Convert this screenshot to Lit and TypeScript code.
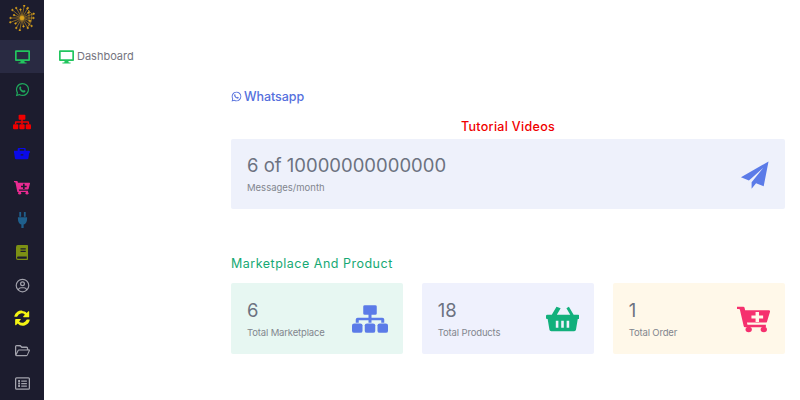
import { LitElement, html, css, svg } from "lit";
import { customElement } from "lit/decorators.js";

const desktop = svg`<path fill-rule="evenodd" d="M1.500 2h21a1.500 1.500 0 0 1 1.500 1.500v14a1.500 1.500 0 0 1-1.500 1.500h-7.500l.6 2.500h2.900v1.500h-13v-1.500h2.900l.6-2.500h-7.500a1.500 1.500 0 0 1-1.500-1.500v-14a1.500 1.500 0 0 1 1.500-1.500zm1.200 2.700v11.600h18.600v-11.600z"/>`;
const whatsapp = svg`<path fill-rule="evenodd" d="M12 1.500a10.500 10.500 0 0 1 0 21c-1.800 0-3.500-.45-5-1.280l-5.700 1.500 1.530-5.580a10.500 10.500 0 0 1 9.170-15.640zm0 2a8.500 8.500 0 0 0-7.100 13.200l-.9 3.300 3.400-.9a8.500 8.500 0 1 0 4.600-15.600z"/><path d="M8.800 7c-.4 0-1 .2-1.400.8-.9 1.200-.7 2.900.6 4.800 1.500 2.200 3.400 3.600 5.400 4 1.400.3 2.800-.4 3.200-1.500.2-.6.2-1.100.1-1.200l-2.400-1.200-1.100 1.300c-1.700-.6-3-1.900-3.800-3.500l.8-1-1-2.400c-.1-.1-.3-.1-.4-.1z"/>`;
const sitemap = svg`<path d="M8.500 1h7a1 1 0 0 1 1 1v5.500a1 1 0 0 1-1 1h-2.500v2.500h7.200a1.300 1.300 0 0 1 1.300 1.300v2.700h-2v-2h-6.500v2h-2v-2h-6.500v2h-2v-2.700a1.300 1.300 0 0 1 1.300-1.300h7.200v-2.500h-2.500a1 1 0 0 1-1-1v-5.500a1 1 0 0 1 1-1z"/><rect x="0" y="15.500" width="7" height="7.500" rx="1.500"/><rect x="8.500" y="15.500" width="7" height="7.500" rx="1.500"/><rect x="17" y="15.500" width="7" height="7.500" rx="1.500"/>`;
const briefcase = svg`<path fill-rule="evenodd" d="M8 1.500h8a1.500 1.500 0 0 1 1.500 1.500v3.500h5a1.500 1.500 0 0 1 1.500 1.500v1c0 .7-.5 1.300-1.200 1.400l-1.300 9.300c-.1.800-.8 1.300-1.600 1.300h-16.800c-.8 0-1.500-.5-1.600-1.300l-1.300-9.300a1.400 1.400 0 0 1-1.200-1.400v-1a1.500 1.500 0 0 1 1.500-1.500h5v-3.500a1.500 1.500 0 0 1 1.500-1.500zm.6 2v3h6.800v-3zm1.400 9v2h4v-2z"/>`;
const cart = svg`<path fill-rule="evenodd" d="M0 1.500h4.500a1 1 0 0 1 1 .8l.4 2.200h17.100a1 1 0 0 1 1 1.250l-2.200 8.500a1 1 0 0 1-1 .75h-13.600l.4 2h13.400v2h-15.100a1 1 0 0 1-1-.8l-2.700-13.700-.4-1h-2.800zm13.500 4.500v3h-3v2.500h3v3h2.500v-3h3v-2.500h-3v-3z"/><circle cx="8.500" cy="21" r="2.300"/><circle cx="19.500" cy="21" r="2.300"/>`;
const plug = svg`<path d="M5 0h4v7h-4zM15 0h4v7h-4zM2 8h20v2.500c0 4.500-3.200 7.700-7.500 8.300v5.200h-5v-5.200c-4.300-.6-7.500-3.800-7.500-8.300z"/>`;
const book = svg`<path fill-rule="evenodd" d="M3.500 0h19a1.500 1.500 0 0 1 1.500 1.500v21a1.500 1.500 0 0 1-1.500 1.500h-19a3.500 3.500 0 0 1-3.500-3.500v-17a3.500 3.500 0 0 1 3.500-3.500zm5.500 5v2h10.500v-2zm0 4v2h10.500v-2zm-5.500 9.500a1.800 1.800 0 0 0 0 3.500h18v-3.500z"/>`;
const user = svg`<path fill-rule="evenodd" d="M12 1a11 11 0 1 1 0 22 11 11 0 0 1 0-22zm0 2a9 9 0 0 0-7 14.650c.8-1.800 2.500-2.900 4.500-2.900h5c2 0 3.700 1.100 4.500 2.900a9 9 0 0 0-7-14.650zm-5.600 16.050a9 9 0 0 0 11.200 0c-.3-1.600-1.600-2.800-3.100-2.800h-5c-1.500 0-2.800 1.200-3.100 2.800zm5.600-13.800a4 4 0 1 1 0 8 4 4 0 0 1 0-8zm0 2a2 2 0 1 0 0 4 2 2 0 0 0 0-4z"/>`;
const sync = svg`<path d="M12 1.500c2.800 0 5.300 1.100 7.100 2.900l2.400-2.400c.4-.4 1.300-.2 1.300.5v7.500c0 .5-.4.800-.8.800h-7.500c-.7 0-1-.8-.5-1.300l2.400-2.400a6.800 6.800 0 0 0-11.200 2.400.8.800 0 0 1-.8.600h-3.300c-.5 0-.8-.4-.7-.9a10.800 10.800 0 0 1 12.600-8.200zM2 13.500h7.500c.7 0 1 .8.500 1.300l-2.400 2.400a6.800 6.800 0 0 0 11.200-2.400.8.800 0 0 1 .8-.6h3.300c.5 0 .8.400.7.900a10.800 10.800 0 0 1-18.200 5.300l-2.400 2.400c-.4.400-1.300.2-1.300-.5v-7.500c0-.5.400-.8.800-.8z"/>`;
const folder = svg`<path fill-rule="evenodd" d="M2.500 3h6.300l2.500 2.500h7.200a2.500 2.500 0 0 1 2.500 2.500v2h1a1.800 1.800 0 0 1 1.600 2.600l-3.300 7a2.500 2.500 0 0 1-2.300 1.400h-15.500a2.500 2.500 0 0 1-2.500-2.500v-13a2.500 2.500 0 0 1 2.500-2.500zm0 2a.5.500 0 0 0-.5.500v11l2-4.400a2.500 2.500 0 0 1 2.300-1.600h12.700v-2a.5.500 0 0 0-.5-.5h-8l-2.500-2.500zm3.800 7a.5.500 0 0 0-.5.300l-3.300 7h15.900a.5.500 0 0 0 .5-.3l3.100-7z"/>`;
const list = svg`<path fill-rule="evenodd" d="M2.500 2h19a2.500 2.500 0 0 1 2.500 2.500v15a2.500 2.500 0 0 1-2.500 2.500h-19a2.500 2.500 0 0 1-2.500-2.500v-15a2.500 2.500 0 0 1 2.500-2.500zm0 2a.5.500 0 0 0-.5.500v15a.5.500 0 0 0 .5.500h19a.5.500 0 0 0 .5-.5v-15a.5.500 0 0 0-.5-.5zm2.500 2.500h3v3h-3zm5 .5h9v2h-9zm-5 3.500h3v3h-3zm5 .5h9v2h-9zm-5 3.500h3v3h-3zm5 .5h9v2h-9z"/>`;
const plane = svg`<path d="M23.600 1.200 .8 14.200l6.600 2.700L19.300 6.400 9.600 18.500v5.300l3.700-4.600 6.300 2.600z"/>`;
const basket = svg`<path fill-rule="evenodd" d="M10.200 .6 5.600 8h-4.400a1.200 1.200 0 0 0-1.200 1.200v1.600c0 .7.500 1.200 1.200 1.200h.4l1.700 9.800c.2.900.9 1.600 1.800 1.600h22.200c.9 0 1.600-.7 1.800-1.600l1.700-9.800h.4c.7 0 1.200-.5 1.200-1.200v-1.600a1.200 1.200 0 0 0-1.200-1.200h-4.400l-4.600-7.400-2.400 1.500 3.700 5.900h-13l3.700-5.900zM9.500 13.500v6.500h2.500v-6.500zm5.250 0v6.500h2.500v-6.500zm5.250 0v6.500h2.500v-6.500z"/>`;

const rail: [ReturnType<typeof svg>, string, boolean][] = [
  [desktop, "green", true],
  [whatsapp, "wa", false],
  [sitemap, "red", false],
  [briefcase, "blue", false],
  [cart, "pink", false],
  [plug, "plug", false],
  [book, "olive", false],
  [user, "grey", false],
  [sync, "yellow", false],
  [folder, "grey", false],
  [list, "grey", false],
];

const spokes = Array.from({ length: 18 }, (_, i) => {
  const a = (i / 18) * Math.PI * 2;
  const r = [11.500, 8.500, 12.500][i % 3];
  const x = 13 + Math.cos(a) * r;
  const y = 13 + Math.sin(a) * r;
  return svg`<line x1="13" y1="13" x2=${x.toFixed(1)} y2=${y.toFixed(1)}/><circle cx=${x.toFixed(1)} cy=${y.toFixed(1)} r=".8"/>`;
});

@customElement("app-root")
export class AppRoot extends LitElement {
  static styles = css`
    :host {
      display: flex;
      width: 800px;
      height: 400px;
      overflow: hidden;
      background: #fff;
      font-family: "Inter", "Noto Sans", sans-serif;
    }
    svg { display: block; fill: currentColor; }
    .rail {
      width: 44px;
      flex: none;
      background: #1c1c2e;
      display: flex;
      flex-direction: column;
    }
    .logo { height: 40px; display: flex; align-items: center; justify-content: center; padding-bottom: 4px; box-sizing: border-box; color: #dca41c; }
    .logo svg { width: 26px; height: 26px; stroke: #dca41c; stroke-width: .55; }
    .item { height: 32.700px; flex: none; display: flex; align-items: center; justify-content: center; }
    .item svg { width: 15px; height: 15px; }
    .item.on { background: #292a42; }
    .green { color: #22c55e; }
    .wa { color: #1fa85c; }
    .red { color: #f00000; }
    .red svg { width: 18px; height: 16px; }
    .blue { color: #0a0ae8; }
    .blue svg { width: 16px; height: 14px; }
    .pink { color: #ea2b92; }
    .pink svg { width: 16px; height: 15px; }
    .plug { color: #1f5f8c; }
    .plug svg { width: 11px; height: 16px; }
    .olive { color: #7c9014; }
    .olive svg { width: 12px; height: 15px; }
    .grey { color: #a3a3ad; }
    .yellow { color: #f4f414; }
    .yellow svg { width: 16px; height: 16px; }
    .main { flex: 1; display: flex; min-width: 0; }
    .crumb {
      width: 187px;
      flex: none;
      box-sizing: border-box;
      padding: 49px 0 0 15px;
      display: flex;
      align-items: flex-start;
      gap: 3px;
      font-size: 11px;
      line-height: 15px;
      color: #75757f;
    }
    .crumb svg { width: 15px; height: 15px; color: #22c55e; }
    .content { width: 554px; flex: none; padding-top: 88px; display: flex; flex-direction: column; }
    .wlink {
      display: flex;
      align-items: center;
      gap: 2px;
      height: 16px;
      color: #5570dd;
      font-size: 12.500px;
      font-weight: 500;
      letter-spacing: -0.05px;
    }
    .wlink svg { width: 11px; height: 11px; }
    .tv {
      margin-top: 14px;
      height: 17px;
      line-height: 17px;
      text-align: center;
      color: #f00000;
      font-size: 12.500px;
      font-weight: 500;
      letter-spacing: 0.3px;
    }
    .card {
      display: flex;
      align-items: center;
      justify-content: space-between;
      box-sizing: border-box;
      border-radius: 2px;
    }
    .hero {
      margin-top: 4px;
      height: 70px;
      padding: 0 16px;
      background: #eef1fb;
    }
    .num { color: #6c7280; font-size: 18.500px; line-height: 22px; }
    .lab { color: #82868e; font-size: 9.500px; line-height: 13px; margin-top: 5px; }
    .stat .lab { letter-spacing: -0.15px; }
    .hero svg { width: 29px; height: 29px; color: #5b7be8; }
    .sub {
      margin-top: 46px;
      height: 17px;
      line-height: 17px;
      color: #16a974;
      font-size: 12.500px;
      font-weight: 400;
      letter-spacing: 0.5px;
    }
    .row { margin-top: 11px; display: grid; grid-template-columns: repeat(3, 1fr); gap: 18.500px; }
    .stat { height: 71px; padding: 0 15px 0 16px; }
    .mint { background: #e7f7f2; }
    .lav { background: #eff1fd; }
    .cream { background: #fff8e9; }
    .i1.stat-icon { width: 36px; height: 30px; }
    .i2.stat-icon { width: 33px; height: 26px; }
    .i3.stat-icon { width: 33px; height: 28px; }
    .i1 { color: #5b7be8; }
    .i2 { color: #12b07c; }
    .i3 { color: #f5306e; }
  `;

  render() {
    return html`
      <nav class="rail">
        <div class="logo">
          <svg viewBox="0 0 26 26">${spokes}<circle cx="13" cy="13" r="2"/><path d="M17 3 L23 9 L22 17 L18 23 M20 5 L20 21" fill="none"/></svg>
        </div>
        ${rail.map(
          ([icon, cls, on]) => html`<div class="item ${cls} ${on ? "on" : ""}"><svg viewBox="0 0 24 24" preserveAspectRatio="none">${icon}</svg></div>`
        )}
      </nav>
      <div class="main">
        <div class="crumb"><svg viewBox="0 0 24 24">${desktop}</svg><span>Dashboard</span></div>
        <div class="content">
          <div class="wlink"><svg viewBox="0 0 24 24">${whatsapp}</svg><span>Whatsapp</span></div>
          <div class="tv">Tutorial Videos</div>
          <div class="card hero">
            <div>
              <div class="num">6 of 10000000000000</div>
              <div class="lab">Messages/month</div>
            </div>
            <svg viewBox="0 0 24 24">${plane}</svg>
          </div>
          <div class="sub">Marketplace And Product</div>
          <div class="row">
            ${this.stat("6", "Total Marketplace", "mint", "i1", sitemap, "0 0 24 24")}
            ${this.stat("18", "Total Products", "lav", "i2", basket, "0 0 32 24")}
            ${this.stat("1", "Total Order", "cream", "i3", cart, "0 0 24 24")}
          </div>
        </div>
      </div>
    `;
  }

  stat(n: string, l: string, bg: string, ic: string, icon: ReturnType<typeof svg>, vb: string) {
    return html`<div class="card stat ${bg}">
      <div><div class="num">${n}</div><div class="lab">${l}</div></div>
      <svg class="stat-icon ${ic}" viewBox=${vb} preserveAspectRatio="none">${icon}</svg>
    </div>`;
  }
}
